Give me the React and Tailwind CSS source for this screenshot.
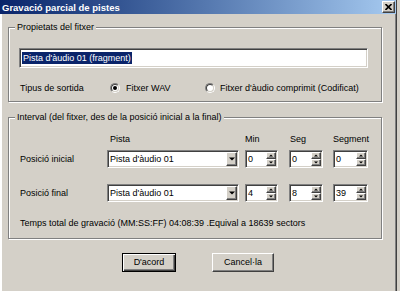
import React from "react";

const sunken =
  "bg-white border border-t-[#808080] border-l-[#808080] border-b-white border-r-white shadow-[inset_1px_1px_0_#404040,inset_-1px_-1px_0_#d4d0c8]";
const raised =
  "bg-[#d4d0c8] border border-t-white border-l-white border-b-[#404040] border-r-[#404040] shadow-[inset_-1px_-1px_0_#808080]";
const etched =
  "border border-[#808080] shadow-[inset_1px_1px_0_#ffffff,1px_1px_0_#ffffff]";

function Radio({ checked }) {
  return (
    <div className="w-[10px] h-[10px] rounded-full border border-t-[#808080] border-l-[#808080] border-b-white border-r-white">
      <div className="w-full h-full rounded-full border border-t-[#404040] border-l-[#404040] border-b-[#d4d0c8] border-r-[#d4d0c8] bg-white flex items-center justify-center">
        {checked && <div className="w-[4px] h-[4px] rounded-full bg-black" />}
      </div>
    </div>
  );
}

function Arrow({ dir = "down", size = 5 }) {
  const pts = dir === "down" ? "0,0 6,0 3,3" : "0,3 6,3 3,0";
  return (
    <svg width={size + 1} height={Math.ceil(size / 2) + 1} viewBox="0 0 6 3" className="block">
      <polygon points={pts} fill="#000" />
    </svg>
  );
}

function Combo({ text }) {
  return (
    <div className={`${sunken} w-[132px] h-[18px] flex items-center pl-[1px] pr-[1px]`}>
      <span className="flex-1 pl-[1px]">{text}</span>
      <div className={`${raised} w-[11px] h-[14px] flex items-center justify-center`}>
        <Arrow dir="down" size={5} />
      </div>
    </div>
  );
}

function Spin({ value, w }) {
  return (
    <div className={`${sunken} ${w} h-[18px] flex items-center pl-[2px] pr-[1px]`}>
      <span className="flex-1">{value}</span>
      <div className="flex flex-col w-[10px] h-[14px]">
        <div className={`${raised} h-[7px] flex items-center justify-center`}>
          <Arrow dir="up" size={3} />
        </div>
        <div className={`${raised} h-[7px] flex items-center justify-center`}>
          <Arrow dir="down" size={3} />
        </div>
      </div>
    </div>
  );
}

export default function App() {
  return (
    <div className="w-[400px] h-[291px] bg-[#d4d0c8] overflow-hidden font-['Liberation_Sans',Arial,sans-serif] text-[9px] leading-[11px] text-black">
      <div className="w-[397px] h-full flex flex-col border-r border-r-[#404040] shadow-[inset_-1px_0_0_#808080,inset_2px_0_0_#ffffff]">
        {/* Title bar */}
        <div className="h-[14px] flex items-center bg-gradient-to-r from-[#0a246a] to-[#a6caf0] pl-[2px] pr-[1px]">
          <span className="flex-1 text-white font-bold text-[9.5px] leading-[13px]">Gravació parcial de pistes</span>
          <div className={`${raised} w-[13px] h-[12px] flex items-center justify-center`}>
            <svg width="7" height="6" viewBox="0 0 7 6">
              <path d="M0.5 0 L6.5 6 M6.5 0 L0.5 6" stroke="#000" strokeWidth="1.6" />
            </svg>
          </div>
        </div>

        {/* Group 1 */}
        <div className={`relative ml-[8px] mt-[13px] w-[374px] h-[75px] ${etched} flex flex-col`}>
          <span className="absolute -top-[6px] left-[6px] px-[2px] bg-[#d4d0c8] leading-[11px]">
            Propietats del fitxer
          </span>
          <div className={`${sunken} mt-[20px] ml-[10px] w-[349px] h-[20px] flex items-center pl-[2px]`}>
            <span className="bg-[#0a246a] text-white px-[1px] leading-[12px]">Pista d'àudio 01 (fragment)</span>
          </div>
          <div className="mt-[14px] ml-[11px] h-[12px] flex items-center">
            <span className="w-[90px]">Tipus de sortida</span>
            <Radio checked />
            <span className="ml-[6px] w-[79px]">Fitxer WAV</span>
            <Radio />
            <span className="ml-[5px]">Fitxer d'àudio comprimit (Codificat)</span>
          </div>
        </div>

        {/* Group 2 */}
        <div className={`relative ml-[8px] mt-[15px] w-[374px] h-[122px] ${etched} flex flex-col pl-[11px]`}>
          <span className="absolute -top-[6px] left-[6px] px-[2px] bg-[#d4d0c8] leading-[11px]">
            Interval (del fitxer, des de la posició inicial a la final)
          </span>
          <div className="mt-[15px] h-[12px] flex items-center">
            <span className="w-[87px]" />
            <span className="w-[132px] pl-[3px]">Pista</span>
            <span className="ml-[6px] w-[33px]">Min</span>
            <span className="ml-[11px] w-[34px] pl-[1px]">Seg</span>
            <span className="ml-[10px] w-[35px]">Segment</span>
          </div>
          <div className="mt-[5px] h-[18px] flex items-center">
            <span className="w-[87px]">Posició inicial</span>
            <Combo text="Pista d'àudio 01" />
            <div className="ml-[6px]"><Spin value="0" w="w-[33px]" /></div>
            <div className="ml-[11px]"><Spin value="0" w="w-[34px]" /></div>
            <div className="ml-[10px]"><Spin value="0" w="w-[35px]" /></div>
          </div>
          <div className="mt-[16px] h-[18px] flex items-center">
            <span className="w-[87px]">Posició final</span>
            <Combo text="Pista d'àudio 01" />
            <div className="ml-[6px]"><Spin value="4" w="w-[33px]" /></div>
            <div className="ml-[11px]"><Spin value="8" w="w-[34px]" /></div>
            <div className="ml-[10px]"><Spin value="39" w="w-[35px]" /></div>
          </div>
          <div className="mt-[15px] h-[12px] flex items-center">
            <span>Temps total de gravació (MM:SS:FF) 04:08:39 .Equival a 18639 sectors</span>
          </div>
        </div>

        {/* Buttons */}
        <div className="mt-[14px] flex">
          <button className="ml-[122px] w-[54px] h-[19px] bg-[#d4d0c8] border border-black shadow-[inset_1px_1px_0_#ffffff,inset_-1px_-1px_0_#404040,inset_-2px_-2px_0_#808080] flex items-center justify-center leading-[11px]">
            D'acord
          </button>
          <button className={`ml-[36px] w-[62px] h-[19px] ${raised} flex items-center justify-center leading-[11px]`}>
            Cancel·la
          </button>
        </div>
      </div>
    </div>
  );
}
